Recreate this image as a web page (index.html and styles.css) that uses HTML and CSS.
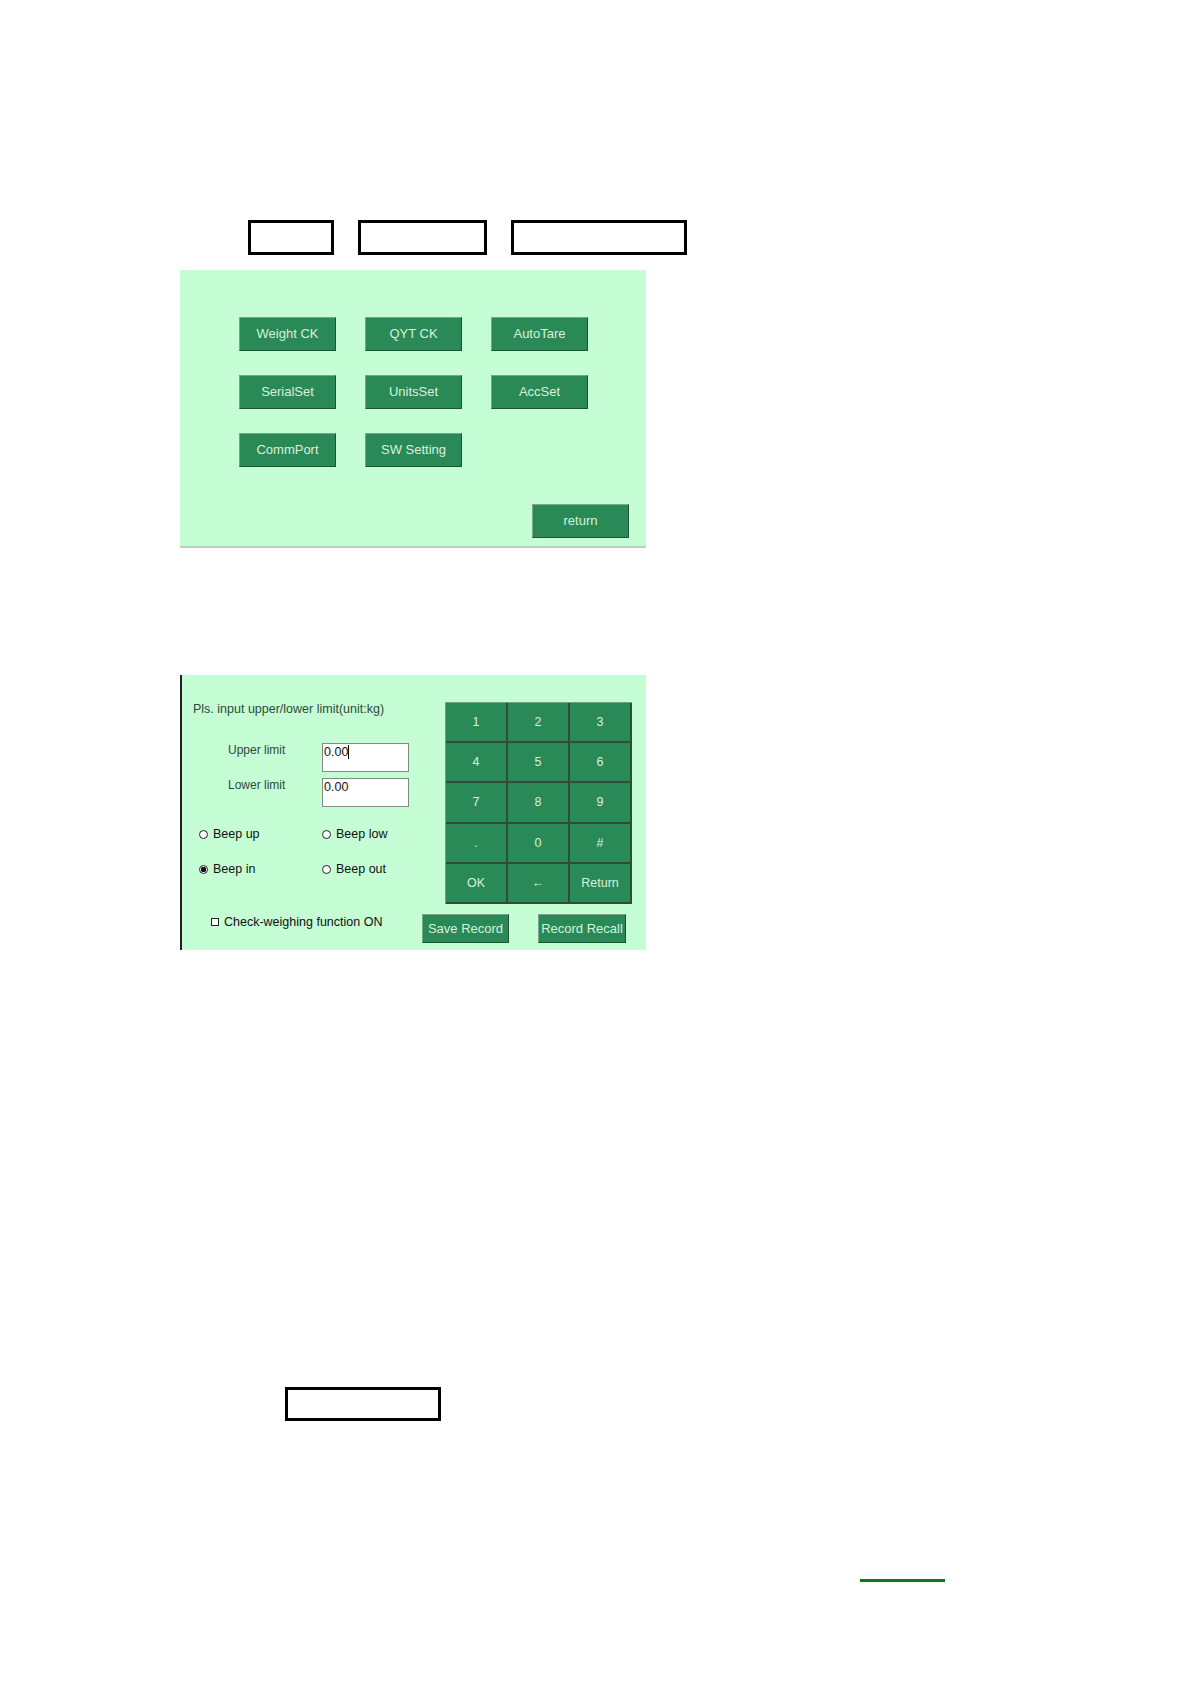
FILE: index.html
```html
<!DOCTYPE html>
<html>
<head>
<meta charset="utf-8">
<link rel="stylesheet" href="styles.css">
</head>
<body>
<div class="page">
  <div class="boxes">
    <div class="box box-a"></div>
    <div class="box box-b"></div>
    <div class="box box-c"></div>
  </div>

  <div class="panel menu">
    <div class="menu-grid">
      <div class="btn">Weight CK</div>
      <div class="btn">QYT CK</div>
      <div class="btn">AutoTare</div>
      <div class="btn">SerialSet</div>
      <div class="btn">UnitsSet</div>
      <div class="btn">AccSet</div>
      <div class="btn">CommPort</div>
      <div class="btn">SW Setting</div>
    </div>
    <div class="menu-foot">
      <div class="btn">return</div>
    </div>
  </div>

  <div class="panel limits">
    <div class="limits-top">
      <div class="limits-left">
        <div class="title">Pls. input upper/lower limit(unit:kg)</div>
        <div class="field first">
          <span class="label">Upper limit</span>
          <div class="input">0.00<span class="caret"></span></div>
        </div>
        <div class="field">
          <span class="label">Lower limit</span>
          <div class="input">0.00</div>
        </div>
        <div class="radios">
          <div class="radio"><span class="dot"></span>Beep up</div>
          <div class="radio"><span class="dot"></span>Beep low</div>
          <div class="radio"><span class="dot on"></span>Beep in</div>
          <div class="radio"><span class="dot"></span>Beep out</div>
        </div>
      </div>
      <div class="keypad">
        <div class="key">1</div><div class="key">2</div><div class="key">3</div>
        <div class="key">4</div><div class="key">5</div><div class="key">6</div>
        <div class="key">7</div><div class="key">8</div><div class="key">9</div>
        <div class="key">.</div><div class="key">0</div><div class="key">#</div>
        <div class="key">OK</div><div class="key">&larr;</div><div class="key">Return</div>
      </div>
    </div>
    <div class="limits-bottom">
      <div class="check"><span class="box-check"></span>Check-weighing function ON</div>
      <div class="btn wide">Save Record</div>
      <div class="btn wide">Record Recall</div>
    </div>
  </div>

  <div class="box box-d"></div>
  <div class="rule"></div>
</div>
</body>
</html>
```

FILE: styles.css
```css
html, body {
  margin: 0;
  padding: 0;
  background: #ffffff;
}
body {
  font-family: "Liberation Sans", Arial, sans-serif;
}
.page {
  width: 1191px;
  height: 1684px;
  overflow: hidden;
}
.boxes {
  display: flex;
  padding-top: 220px;
  padding-left: 248px;
}
.box {
  box-sizing: border-box;
  border: 3px solid #000;
  height: 35px;
  background: #fff;
}
.box-a { width: 86px; }
.box-b { width: 129px; margin-left: 24px; }
.box-c { width: 176px; margin-left: 24px; }

.panel {
  box-sizing: border-box;
  width: 466px;
  margin-left: 180px;
  background: #c5fdd5;
}
.menu {
  margin-top: 15px;
  height: 278px;
  border-bottom: 2px solid #c3cbc5;
  padding: 47px 17px 0 59px;
}
.menu-grid {
  display: grid;
  grid-template-columns: repeat(3, 97px);
  grid-auto-rows: 34px;
  column-gap: 29px;
  row-gap: 24px;
}
.menu-foot {
  display: flex;
  justify-content: flex-end;
  margin-top: 37px;
}
.menu-foot .btn {
  width: 97px;
  height: 34px;
}
.btn {
  box-sizing: border-box;
  background: #2a8a57;
  color: #d8f1dc;
  font-size: 13px;
  display: flex;
  align-items: center;
  justify-content: center;
  border: 1px solid;
  border-color: #79a586 #1e5234 #1e5234 #79a586;
  padding-bottom: 1px;
}

.limits {
  margin-top: 127px;
  height: 275px;
  border-left: 2px solid #222;
  padding-top: 27px;
}
.limits-top {
  display: flex;
}
.limits-left {
  width: 263px;
}
.title {
  font-size: 12.5px;
  line-height: 14px;
  color: #2d4a38;
  margin-left: 11px;
}
.field {
  display: flex;
  align-items: flex-start;
  margin-top: 6px;
}
.field.first {
  margin-top: 27px;
}
.label {
  font-size: 12px;
  line-height: 14px;
  color: #2d4a38;
  width: 94px;
  margin-left: 46px;
}
.input {
  box-sizing: border-box;
  width: 87px;
  height: 29px;
  background: #fff;
  border: 1px solid #7f8b83;
  font-size: 12.5px;
  line-height: 14px;
  padding: 1px 0 0 1px;
  color: #111;
  display: flex;
  align-items: flex-start;
}
.caret {
  display: inline-block;
  width: 1px;
  height: 14px;
  background: #000;
}
.radios {
  display: grid;
  grid-template-columns: 123px 100px;
  row-gap: 21px;
  margin-top: 20px;
  margin-left: 17px;
}
.radio {
  display: flex;
  align-items: center;
  font-size: 12.5px;
  line-height: 14px;
  color: #111;
}
.dot {
  box-sizing: border-box;
  width: 9px;
  height: 9px;
  border: 1px solid #222;
  border-radius: 50%;
  background: #fff;
  margin-right: 5px;
  position: relative;
}
.dot.on {
  background: radial-gradient(circle, #111 0 2.6px, #fff 3px);
}
.keypad {
  width: 187px;
  height: 202px;
  display: grid;
  grid-template-columns: repeat(3, 1fr);
  grid-template-rows: repeat(5, 1fr);
  background: #2a8a57;
  box-sizing: border-box;
  border-left: 1px solid #6fa07f;
  border-top: 1px solid #6fa07f;
}
.key {
  box-sizing: border-box;
  display: flex;
  align-items: center;
  justify-content: center;
  color: #d8f1dc;
  font-size: 12.5px;
  border-right: 2px solid #2f4d3b;
  border-bottom: 2px solid #2f4d3b;
}
.limits-bottom {
  display: flex;
  align-items: flex-start;
  margin-top: 10px;
  padding-left: 29px;
}
.check {
  width: 211px;
  display: flex;
  align-items: center;
  font-size: 12.5px;
  line-height: 14px;
  color: #111;
  margin-top: 1px;
}
.box-check {
  box-sizing: border-box;
  width: 8px;
  height: 8px;
  border: 1px solid #222;
  background: #fff;
  margin-right: 5px;
}
.btn.wide {
  width: 87px;
  height: 29px;
  font-size: 13px;
}
.btn.wide + .btn.wide {
  width: 88px;
  margin-left: 29px;
}

.box-d {
  width: 156px;
  height: 34px;
  margin-top: 437px;
  margin-left: 285px;
}
.rule {
  width: 85px;
  height: 3px;
  background: #127a12;
  margin-top: 158px;
  margin-left: 860px;
}
```
